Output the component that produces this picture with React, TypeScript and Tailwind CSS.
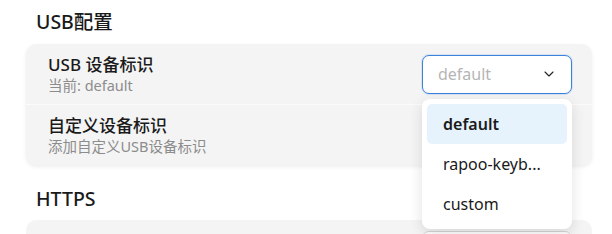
import React from 'react';
import { ChevronDown } from 'lucide-react';

const options = ['default', 'rapoo-keyb...', 'custom'];

export default function App() {
  return (
    <div className="h-screen overflow-hidden bg-white pl-[26px] pr-5 pt-2 font-['Noto_Sans','Noto_Sans_CJK_SC',sans-serif] text-[#1a1a1a]">
      {/* USB section */}
      <h2 className="h-7 pl-[10px] text-[19.5px] leading-7 font-medium mb-2">USB配置</h2>
      <div className="rounded-[10px] bg-[#f4f4f4] shadow-[0_2px_4px_rgba(0,0,0,0.07)]">
        <div className="flex h-[60px] items-center justify-between pl-[22px] pr-5">
          <div className="flex flex-col">
            <span className="text-[17px] leading-[22px] font-medium">USB 设备标识</span>
            <span className="text-[14.5px] leading-[18px] text-[#8c8c8c]">当前: default</span>
          </div>
          <div className="relative">
            <button className="flex h-[39px] w-[150px] items-center justify-between rounded-[7px] border border-[#3a82dc] bg-white pl-[15px] pr-[14px] shadow-[0_0_0_1px_rgba(58,130,220,0.15)]">
              <span className="text-[16px] text-[#b5b5b5]">default</span>
              <ChevronDown className="h-4 w-4 text-[#222]" strokeWidth={1.6} />
            </button>
            <div className="absolute left-0 top-[44px] z-10 w-[150px] rounded-[8px] bg-white p-[5px] shadow-[0_4px_14px_rgba(0,0,0,0.12)]">
              {options.map((o, i) => (
                <div
                  key={o}
                  className={`flex h-10 items-center rounded-[5px] pl-4 pr-2 text-[16px] whitespace-nowrap ${i === 0 ? 'bg-[#e6f2fc] font-semibold' : ''}`}
                >
                  {o}
                </div>
              ))}
            </div>
          </div>
        </div>
        <div className="flex h-[61px] items-center border-t border-[#fbfbfb] pl-[22px] pr-5">
          <div className="flex flex-col">
            <span className="text-[17px] leading-[22px] font-medium">自定义设备标识</span>
            <span className="text-[14.5px] leading-[18px] text-[#8c8c8c]">添加自定义USB设备标识</span>
          </div>
        </div>
      </div>

      {/* HTTPS section */}
      <h2 className="mt-5 h-7 pl-[10px] text-[19.5px] leading-7 font-medium mb-[7px]">HTTPS</h2>
      <div className="rounded-[10px] bg-[#f4f4f4]">
        <div className="flex h-[60px] items-center justify-end pr-5">
          <div className="h-[39px] w-[150px] rounded-[7px] border border-[#d6d6d6] bg-white" />
        </div>
      </div>
    </div>
  );
}
